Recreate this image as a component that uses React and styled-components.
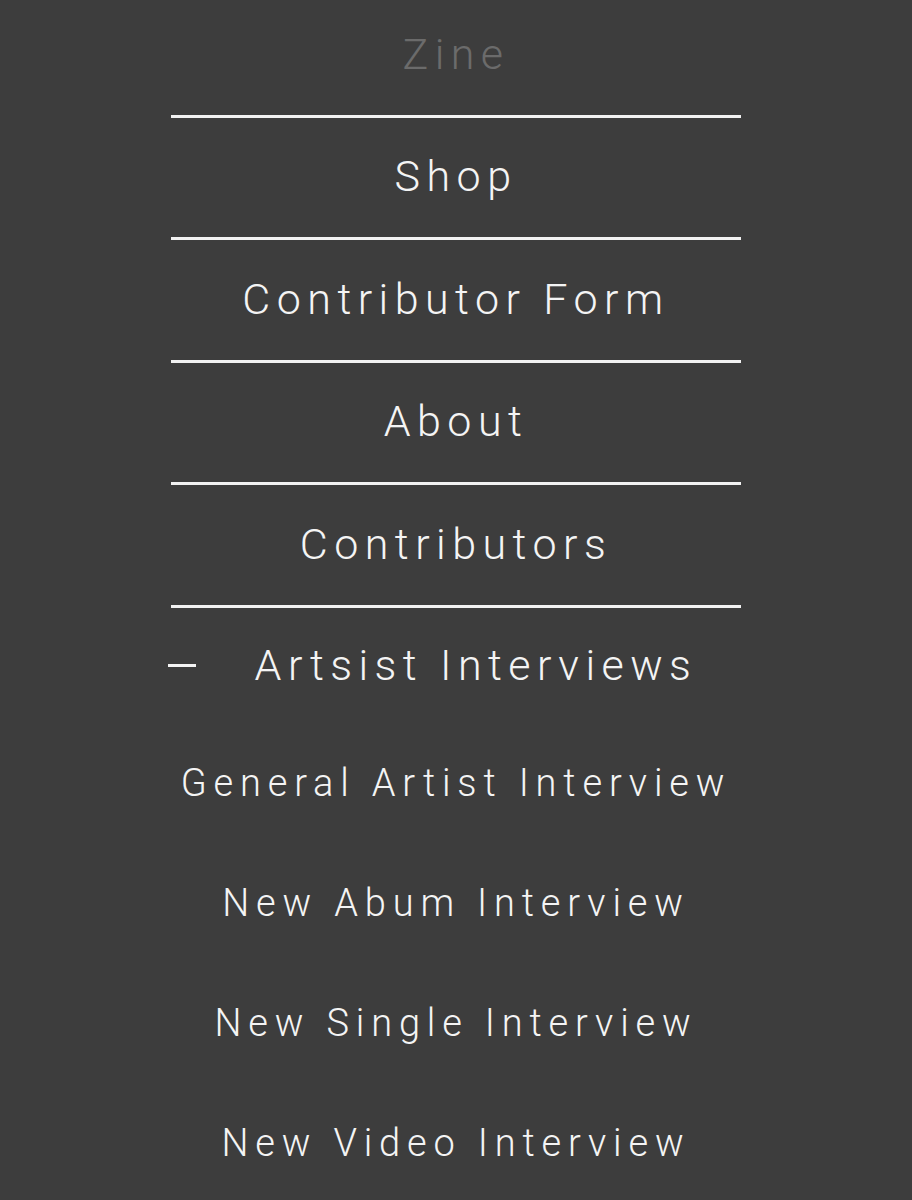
import React from "react";
import styled, { createGlobalStyle } from "styled-components";

const Global = createGlobalStyle`
  html, body { margin: 0; padding: 0; background: #3d3d3d; }
  body { font-family: Roboto, "Liberation Sans", sans-serif; }
`;

const Page = styled.div`
  width: 912px;
  height: 1200px;
  overflow: hidden;
  background: #3d3d3d;
  display: flex;
  justify-content: center;
`;

const Menu = styled.nav`
  width: 570px;
  margin-top: -5px;
  display: flex;
  flex-direction: column;
`;

const Row = styled.a`
  display: flex;
  align-items: center;
  justify-content: center;
  height: 122.5px;
  flex: none;
  border-bottom: 3px solid #f2f2f2;
  color: ${(p) => (p.$dim ? "#6b6b6b" : "#f4f4f4")};
  font-size: 43px;
  font-weight: 300;
  letter-spacing: 0.15em;
  text-decoration: none;
  padding-bottom: 2px;
  box-sizing: border-box;
  white-space: nowrap;
`;

const Toggle = styled.div`
  display: flex;
  align-items: center;
  height: 115px;
  flex: none;
  color: #f4f4f4;
  font-size: 43px;
  font-weight: 300;
  letter-spacing: 0.15em;
  padding-bottom: 0;
  box-sizing: border-box;
`;

const Minus = styled.span`
  display: block;
  width: 28px;
  height: 3px;
  background: #f4f4f4;
  margin-left: -3px;
  margin-right: 15px;
  flex: none;
`;

const ToggleLabel = styled.span`
  flex: 1;
  text-align: center;
  white-space: nowrap;
`;

const SubItem = styled.a`
  display: flex;
  align-items: center;
  justify-content: center;
  height: 120px;
  flex: none;
  color: #f4f4f4;
  font-size: 38px;
  font-weight: 300;
  letter-spacing: 0.18em;
  text-decoration: none;
  white-space: nowrap;
`;

const mainItems = ["Shop", "Contributor Form", "About", "Contributors"];
const subItems = [
  "General Artist Interview",
  "New Abum Interview",
  "New Single Interview",
  "New Video Interview",
];

export default function App() {
  return (
    <>
      <Global />
      <Page>
        <Menu>
          <Row $dim>Zine</Row>
          {mainItems.map((t) => (
            <Row key={t}>{t}</Row>
          ))}
          <Toggle>
            <Minus />
            <ToggleLabel>Artsist Interviews</ToggleLabel>
          </Toggle>
          {subItems.map((t) => (
            <SubItem key={t}>{t}</SubItem>
          ))}
        </Menu>
      </Page>
    </>
  );
}
